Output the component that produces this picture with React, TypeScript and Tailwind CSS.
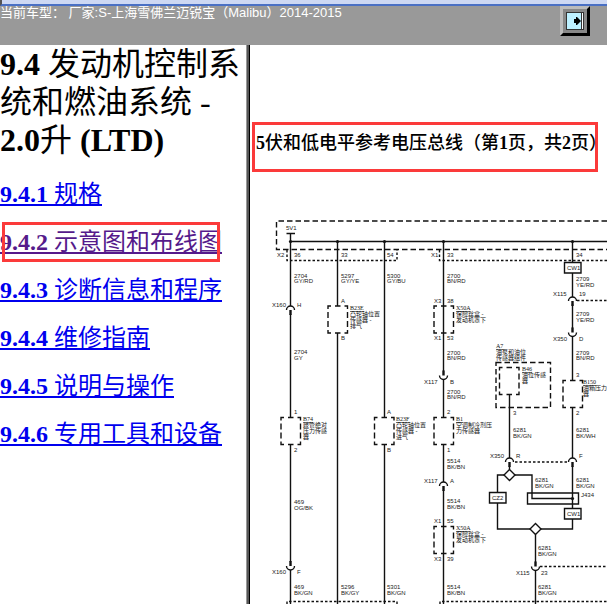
import React from "react";

const CHAPTERS = [
  { no: "9.4.1", title: "规格" },
  { no: "9.4.2", title: "示意图和布线图", visited: true },
  { no: "9.4.3", title: "诊断信息和程序" },
  { no: "9.4.4", title: "维修指南" },
  { no: "9.4.5", title: "说明与操作" },
  { no: "9.4.6", title: "专用工具和设备" },
];

type Label = [number, number, string];

// Wire numbers, colours, connector names and pin numbers
const LABELS: Label[] = [
  [286, 230, "5V1"],
  [277, 257, "X2"], [294, 257, "36"], [341, 257, "33"], [387, 257, "54"],
  [431, 257, "X1"], [447, 257, "33"], [576, 257, "34"],
  [294, 278, "2704"], [294, 283, "GY/RD"],
  [341, 278, "5297"], [341, 283, "GY/YE"],
  [387, 278, "5300"], [387, 283, "GY/BU"],
  [447, 278, "2700"], [447, 283, "BN/RD"],
  [567, 270, "CW1"],
  [576, 281, "2709"], [576, 287, "YE/RD"],
  [553, 296, "X115"], [579, 296, "19"],
  [272, 307, "X160"], [297, 307, "H"],
  [341, 303, "A"], [341, 340, "B"],
  [434, 303, "X3"], [447, 303, "38"], [434, 340, "X1"], [447, 340, "53"],
  [576, 316, "2709"], [576, 322, "YE/RD"],
  [553, 341, "X350"], [579, 341, "D"],
  [576, 355, "2709"], [576, 360, "BN/RD"],
  [294, 354, "2704"], [294, 360, "GY"],
  [447, 355, "2700"], [447, 360, "BN/RD"],
  [424, 384, "X117"], [450, 384, "B"],
  [447, 394, "2700"], [447, 399, "BN/RD"],
  [576, 377, "3"], [576, 415, "2"], [513, 415, "3"],
  [294, 414, "1"], [294, 452, "2"],
  [387, 414, "A"], [387, 452, "B"],
  [447, 414, "2"], [447, 452, "1"],
  [513, 432, "6281"], [513, 438, "BK/GN"],
  [576, 432, "6281"], [576, 438, "BK/WH"],
  [490, 458, "X350"], [516, 458, "R"], [579, 458, "F"],
  [447, 463, "5514"], [447, 469, "BK/BN"],
  [424, 483, "X117"], [450, 483, "A"],
  [535, 482, "6281"], [535, 488, "BK/GN"],
  [576, 482, "6281"], [576, 488, "BK/GN"],
  [492, 500, "CZ2"], [581, 497, "J434"], [567, 516, "CW1"],
  [294, 504, "469"], [294, 510, "OG/BK"],
  [447, 503, "5514"], [447, 509, "BK/BN"],
  [434, 523, "X1"], [447, 523, "55"], [434, 561, "X3"], [447, 561, "39"],
  [538, 550, "6281"], [538, 556, "BK/GN"],
  [516, 575, "X115"], [541, 575, "23"],
  [272, 574, "X160"], [297, 574, "F"],
  [294, 589, "469"], [294, 595, "BK/GN"],
  [341, 589, "5296"], [341, 595, "BK/GY"],
  [387, 589, "5301"], [387, 595, "BK/GN"],
  [447, 589, "5514"], [447, 595, "BK/BN"],
  [538, 589, "6281"], [538, 595, "BK/GN"],
];

// Component name followed by its description lines
const PARTS: { x: number; y: number; name: string; lines: string[] }[] = [
  { x: 350, y: 310, name: "B23E", lines: ["凸轮轴位置", "传感器 -", "排气"] },
  { x: 456, y: 310, name: "X50A", lines: ["保险丝盒 -", "发动机罩下"] },
  { x: 496, y: 348, name: "A7", lines: ["油泵和油位", "传感器组件"] },
  { x: 522, y: 371, name: "B46", lines: ["油位传感", "器"] },
  { x: 583, y: 384, name: "B150", lines: ["油箱压力", "器"] },
  { x: 303, y: 421, name: "B74", lines: ["歧管绝对", "压力传感", "器"] },
  { x: 396, y: 421, name: "B23F", lines: ["凸轮轴位置", "传感器 -", "进气"] },
  { x: 456, y: 421, name: "B1", lines: ["空调制冷剂压", "力传感器"] },
  { x: 456, y: 530, name: "X50A", lines: ["保险丝盒 -", "发动机罩下"] },
];

// Left edge and top edge of the dashed component boxes
const BOXES = [
  [328, 306], [434, 306], [281, 417.5], [374.5, 417.5], [434, 417.5],
  [434, 526.5], [563, 380.5], [499.5, 367.5],
];

function SocketTop({ x, y }: { x: number; y: number }) {
  return (
    <g>
      <path d={`M${x - 4} ${y + 4}a4 4 0 0 1 8 0`} />
      <path d={`M${x} ${y + 4}v5`} strokeWidth="2.4" />
    </g>
  );
}

function SocketBottom({ x, y }: { x: number; y: number }) {
  return (
    <g>
      <path d={`M${x - 4} ${y - 4}a4 4 0 0 0 8 0`} />
      <path d={`M${x} ${y - 9}v5`} strokeWidth="2.4" />
    </g>
  );
}

function WiringDiagram() {
  return (
    <svg
      width="357"
      height="404"
      viewBox="250 200 357 404"
      className="block shrink-0"
      role="img"
      aria-label="5伏和低电平参考电压总线"
    >
      <g fill="none" stroke="#111" strokeWidth="1.4">
        <path d="M607 221H276.5V249.5H607" strokeDasharray="5.5 3" />
        <path d="M287 250V260.5H397V250" strokeDasharray="2.5 2" />
        <path d="M439.5 250V260.5H607" strokeDasharray="2.5 2" />
        <path d="M287 604V601.5H397V604M440 604V601.5H607" strokeDasharray="2.5 2" />
        <path d="M577 300.5H607M515 462H568M540 566.5H607" strokeDasharray="2.5 2" />
        <path d="M286.5 233.5H295M290.5 233.5V241.5H607" />
        {/* Column wires */}
        <path d="M290.5 241V306M290.5 314V417.5M290.5 444.5V562M290.5 570V604" />
        <path d="M337.5 241V306M337.5 333V604" />
        <path d="M384.5 241V417.5M384.5 444.5V604" />
        <path d="M443.5 241V371M443.5 379V417.5M443.5 444.5V482M443.5 490V604" />
        <path d="M572.5 241V262.5M572.5 273V297M572.5 304V328M572.5 336V380.5M572.5 407.5V458M572.5 466V508.5M572.5 519V529H541" />
        <path d="M509.5 394.5V458M509.5 466V469.5" />
        <path d="M504 475H497.5V492.5M497.5 503V529H530M515 475H532V498.5H572.5" />
        <path d="M535.5 534.5V562M535.5 571V604" />
        <path d="M509.5 469.5l5.5 5.5-5.5 5.5-5.5-5.5zM535.5 523.5l5.5 5.5-5.5 5.5-5.5-5.5z" />
        <path d="M564.5 262.5h16.5v10.5h-16.5zM489.5 492.5h16.5v10.5h-16.5zM564.5 508.5h16.5v10.5h-16.5zM527.5 493h51v11h-51z" />
        <rect x="496" y="362.5" width="54.5" height="45" strokeDasharray="5.5 3" />
        {BOXES.map(([x, y]) => (
          <g key={`${x}-${y}`}>
            <path d={`M${x} ${y + 3}v-3h3M${x + 16.5} ${y}h3v3M${x + 19.5} ${y + 24}v3h-3M${x + 3} ${y + 27}h-3v-3`} />
            <path d={`M${x + 7} ${y}h5.5M${x + 7} ${y + 27}h5.5M${x} ${y + 6}v6M${x} ${y + 15}v6M${x + 19.5} ${y + 6}v6M${x + 19.5} ${y + 15}v6`} />
          </g>
        ))}
        <SocketTop x={290.5} y={306} />
        <SocketTop x={572.5} y={297} />
        <SocketTop x={509.5} y={458} />
        <SocketTop x={572.5} y={458} />
        <SocketTop x={443.5} y={482} />
        <SocketBottom x={443.5} y={379.5} />
        <SocketBottom x={572.5} y={336.5} />
        <SocketBottom x={290.5} y={570} />
        <SocketBottom x={535.5} y={570.5} />
      </g>
      <g fill="#111">
        {[290.5, 337.5, 384.5, 443.5, 572.5].map((x) => (
          <circle key={x} cx={x} cy="241.5" r="1.6" />
        ))}
        <circle cx="572.5" cy="498.5" r="1.6" />
      </g>
      <g fill="#222" className="font-['Liberation_Sans',sans-serif] text-[6px]">
        {LABELS.map(([x, y, text]) => (
          <text key={`${x}-${y}`} x={x} y={y}>{text}</text>
        ))}
      </g>
      <g fill="#111" className="font-['Liberation_Serif','Noto_Sans_CJK_SC',serif] text-[6px]">
        {PARTS.map((part) => (
          <g key={`${part.x}-${part.y}`}>
            <text x={part.x} y={part.y} textDecoration="underline">{part.name}</text>
            {part.lines.map((line, i) => (
              <text key={line} x={part.x} y={part.y + 6 * (i + 1)}>{line}</text>
            ))}
          </g>
        ))}
      </g>
    </svg>
  );
}

export default function App() {
  return (
    <div className="flex h-screen flex-col overflow-hidden bg-white font-['Liberation_Serif','Noto_Sans_CJK_SC',serif] text-black">
      <header className="h-[45px] shrink-0 bg-[#999999]">
        <div className="h-[6px] border-b-2 border-l-2 border-b-[#4a70c4] border-l-[#555555] bg-[#cdd8f3]" />
        <div className="flex items-start justify-between pr-[17px]">
          <p className="font-['Liberation_Sans','Noto_Sans_CJK_SC',sans-serif] text-[13px] leading-[14px] whitespace-nowrap text-white">
            当前车型： 厂家:S-上海雪佛兰迈锐宝（Malibu）2014-2015
          </p>
          <button
            type="button"
            aria-label="切换目录"
            className="flex size-[30px] items-center justify-center border-3 border-t-[#bbbbbb] border-r-black border-b-black border-l-[#bbbbbb] bg-[#888888]"
          >
            <svg width="18" height="18" viewBox="0 0 18 18" className="shrink-0">
              <rect x="0.5" y="0.5" width="17" height="17" fill="#bdf0ff" stroke="#333" />
              <path d="M15.5 1v16" stroke="#333" />
              <path d="M16.5 1v16" stroke="#fff" />
              <path d="M8 7h2V5h1l4 4-4 4h-1v-2H8z" fill="#000" />
            </svg>
          </button>
        </div>
      </header>
      <div className="flex min-h-0 flex-1">
        <nav className="w-[246px] shrink-0 overflow-hidden">
          <h1 className="text-[32px] leading-[38px] font-bold">
            9.4 <span className="font-normal">发动机控制系统和燃油系统 -</span> 2.0<span className="font-normal">升</span> (LTD)
          </h1>
          <ul className="mt-[21px] flex flex-col gap-5 text-2xl leading-7 font-bold whitespace-nowrap">
            {CHAPTERS.map((c) => (
              <li key={c.no} className="relative">
                <a
                  href={`#${c.no}`}
                  className={
                    c.visited
                      ? "text-[#551a8b] underline decoration-2 underline-offset-2"
                      : "text-[#0000ee] underline decoration-2 underline-offset-2"
                  }
                >
                  {c.no} <span className="font-normal">{c.title}</span>
                </a>
                {c.visited && (
                  <span className="pointer-events-none absolute -top-1.5 left-0.5 h-10 w-[218px] border-3 border-[#fb3a3a]" />
                )}
              </li>
            ))}
          </ul>
        </nav>
        <div className="w-1 shrink-0 border-r border-l border-r-black border-l-[#999999] bg-[#555555]" />
        <main className="flex min-w-0 flex-1 flex-col overflow-hidden">
          <h2 className="mt-[77px] mr-[9px] ml-0.5 h-[50px] shrink-0 border-3 border-[#fb3a3a] pl-px text-lg leading-9 font-bold whitespace-nowrap">
            5<span className="font-medium">伏和低电平参考电压总线（第</span>1<span className="font-medium">页，共</span>2<span className="font-medium">页）</span>
          </h2>
          <div className="mt-7">
            <WiringDiagram />
          </div>
        </main>
      </div>
    </div>
  );
}
